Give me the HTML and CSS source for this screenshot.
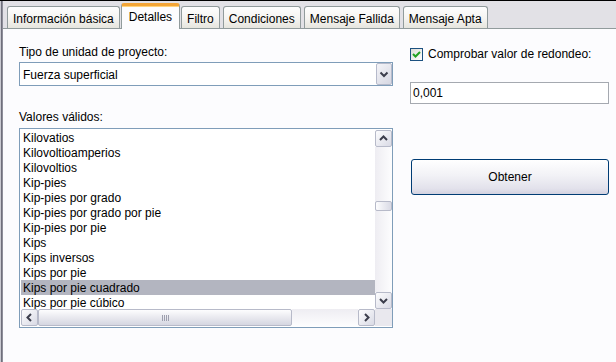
FILE: index.html
```html
<!DOCTYPE html>
<html lang="es">
<head>
<meta charset="utf-8">
<title>Detalles</title>
<link rel="stylesheet" href="styles.css">
</head>
<body>
<div class="window">
  <div class="frame"></div>
  <div class="main">
    <div class="tabs">
      <div class="tab">Información básica</div>
      <div class="tab tab-active">Detalles</div>
      <div class="tab">Filtro</div>
      <div class="tab">Condiciones</div>
      <div class="tab">Mensaje Fallida</div>
      <div class="tab">Mensaje Apta</div>
    </div>
    <div class="panel">
      <div class="col-left">
        <div class="label">Tipo de unidad de proyecto:</div>
        <div class="combo">
          <span class="combo-text">Fuerza superficial</span>
          <span class="combo-btn"><svg width="14" height="20" viewBox="0 0 14 20"><polyline points="3.5,8.5 7,12 10.5,8.5" fill="none" stroke="#3c3e4c" stroke-width="2"/></svg></span>
        </div>
        <div class="label label-values">Valores válidos:</div>
        <div class="listbox">
          <div class="list-items">
            <div class="item">Kilovatios</div>
            <div class="item">Kilovoltioamperios</div>
            <div class="item">Kilovoltios</div>
            <div class="item">Kip-pies</div>
            <div class="item">Kip-pies por grado</div>
            <div class="item">Kip-pies por grado por pie</div>
            <div class="item">Kip-pies por pie</div>
            <div class="item">Kips</div>
            <div class="item">Kips inversos</div>
            <div class="item">Kips por pie</div>
            <div class="item item-selected">Kips por pie cuadrado</div>
            <div class="item">Kips por pie cúbico</div>
          </div>
          <div class="vscroll">
            <div class="sbtn"><svg width="15" height="15" viewBox="0 0 15 15"><polyline points="4,9 7.5,5.5 11,9" fill="none" stroke="#3c3e4c" stroke-width="2"/></svg></div>
            <div class="vtrack"><div class="vthumb"></div></div>
            <div class="sbtn"><svg width="15" height="15" viewBox="0 0 15 15"><polyline points="4,6 7.5,9.5 11,6" fill="none" stroke="#3c3e4c" stroke-width="2"/></svg></div>
          </div>
          <div class="hscroll">
            <div class="sbtn"><svg width="15" height="15" viewBox="0 0 15 15"><polyline points="9,4 5.5,7.5 9,11" fill="none" stroke="#3c3e4c" stroke-width="2"/></svg></div>
            <div class="hthumb"><span class="grip"></span></div>
            <div class="htrack"></div>
            <div class="sbtn"><svg width="15" height="15" viewBox="0 0 15 15"><polyline points="6,4 9.5,7.5 6,11" fill="none" stroke="#3c3e4c" stroke-width="2"/></svg></div>
          </div>
          <div class="corner"></div>
        </div>
      </div>
      <div class="col-right">
        <div class="check-row">
          <span class="checkbox"><svg width="11" height="11" viewBox="0 0 11 11"><polyline points="2,5 4.5,7.5 9,3" fill="none" stroke="#21a121" stroke-width="2"/></svg></span>
          <span>Comprobar valor de redondeo:</span>
        </div>
        <div class="textbox">0,001</div>
        <div class="button">Obtener</div>
      </div>
    </div>
  </div>
</div>
</body>
</html>
```

FILE: styles.css
```css
* { box-sizing: border-box; }
html, body { margin: 0; padding: 0; }
body {
  width: 616px;
  height: 362px;
  overflow: hidden;
  background: #fcfcfe;
  font-family: "Liberation Sans", Arial, sans-serif;
  font-size: 12px;
  color: #000;
}
.window {
  display: flex;
  height: 362px;
  border-top: 1px solid #000;
}
.frame {
  width: 3px;
  flex: none;
  background: linear-gradient(to right, #c9c9d1 0 1px, #6f6f7b 1px 2px, #8e8e9a 2px 3px);
}
.main {
  flex: 1;
  display: flex;
  flex-direction: column;
  min-width: 0;
}
.tabs {
  height: 27px;
  flex: none;
  display: flex;
  align-items: flex-end;
  gap: 3px;
  padding-left: 4px;
  background: #e2e1e6;
}
.tab {
  height: 22px;
  padding: 5px 5px 0;
  line-height: 15px;
  white-space: nowrap;
  border: 1px solid #919b9c;
  border-bottom: none;
  border-radius: 3px 3px 0 0;
  background: linear-gradient(#fefefe, #f5f4f1 55%, #e6e5de);
}
.tab-active {
  position: relative;
  z-index: 1;
  height: 26px;
  margin: 0 -2px -1px;
  padding: 4px 7px 0;
  border-top: 3px solid #f3a537;
  box-shadow: inset 0 1px 0 #ffd27a;
  background: #fcfcfe;
}
.panel {
  flex: 1;
  display: flex;
  gap: 17px;
  padding: 16px 0 0 16px;
  border-top: 1px solid #919b9c;
  background: #fcfcfe;
}
.col-left {
  width: 374px;
  flex: none;
  display: flex;
  flex-direction: column;
}
.label {
  height: 14px;
  line-height: 14px;
}
.combo {
  margin-top: 3px;
  height: 24px;
  display: flex;
  border: 1px solid #7f9db9;
  background: #fff;
}
.combo-text {
  flex: 1;
  padding: 5px 0 0 3px;
  line-height: 15px;
}
.combo-btn {
  width: 16px;
  display: flex;
  align-items: center;
  justify-content: center;
  border: 1px solid #b6bacb;
  border-radius: 2px;
  background: linear-gradient(135deg, #f4f4f8, #d6d7e2);
}
.label-values { margin-top: 24px; }
.listbox {
  margin-top: 4px;
  height: 200px;
  padding: 1px 0 1px 1px;
  border: 1px solid #7f9db9;
  background: #fff;
  display: grid;
  grid-template-columns: 1fr 17px;
  grid-template-rows: 1fr 17px;
  overflow: hidden;
}
.list-items {
  overflow: hidden;
  min-height: 0;
}
.item {
  height: 15px;
  line-height: 15px;
  padding: 1px 0 0 2px;
  white-space: nowrap;
}
.item-selected { background: #b3b5c0; }
.sbtn {
  width: 17px;
  height: 17px;
  flex: none;
  display: flex;
  align-items: center;
  justify-content: center;
  border: 1px solid #b7bac9;
  border-radius: 2px;
  background: linear-gradient(135deg, #fdfdfe, #d9dae5);
}
.vscroll {
  display: flex;
  flex-direction: column;
  min-height: 0;
}
.vtrack {
  flex: 1;
  padding-top: 54px;
  background: linear-gradient(to right, #eeedf2, #fdfdfe);
}
.vthumb {
  height: 10px;
  border: 1px solid #b7bac9;
  border-radius: 2px;
  background: linear-gradient(to right, #fdfdfe, #d9dae5);
}
.hscroll {
  display: flex;
}
.hthumb {
  width: 254px;
  flex: none;
  display: flex;
  align-items: center;
  justify-content: center;
  border: 1px solid #b7bac9;
  border-radius: 2px;
  background: linear-gradient(#fdfdfe, #e9e9ef 50%, #d5d6e1);
}
.grip {
  width: 7px;
  height: 6px;
  background: repeating-linear-gradient(to right, #9d9fae 0 1px, transparent 1px 2px);
}
.htrack {
  flex: 1;
  background: linear-gradient(#eeedf2, #fdfdfe);
}
.corner { background: #e9e8ee; }
.col-right {
  width: 199px;
  flex: none;
  display: flex;
  flex-direction: column;
  padding-top: 2px;
}
.check-row {
  height: 14px;
  display: flex;
  align-items: center;
  gap: 5px;
  line-height: 14px;
  white-space: nowrap;
}
.checkbox {
  width: 13px;
  height: 13px;
  flex: none;
  display: flex;
  align-items: center;
  justify-content: center;
  border: 1px solid #1c5180;
  background: linear-gradient(135deg, #dcdcd7, #fff);
}
.textbox {
  margin-top: 21px;
  height: 22px;
  padding-left: 2px;
  line-height: 20px;
  border: 1px solid #a5a9b0;
  background: #fff;
}
.button {
  margin: 55px 0 0 1px;
  width: 198px;
  height: 36px;
  line-height: 34px;
  text-align: center;
  border: 1px solid #003c74;
  border-radius: 3px;
  background: linear-gradient(#ffffff, #f2f2f6 45%, #e2e1eb 85%, #d3d2e0);
}
```
